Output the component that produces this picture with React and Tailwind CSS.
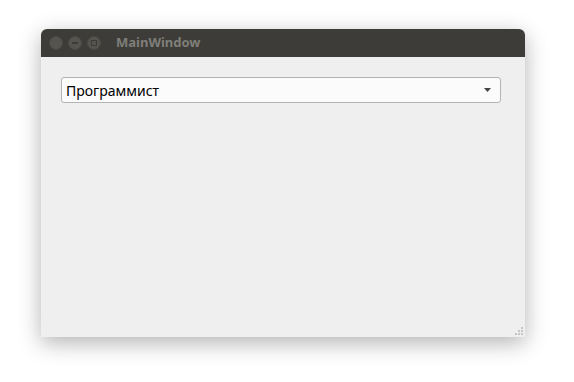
export default function App() {
  return (
    <div className="w-[574px] h-[382px] bg-white relative overflow-hidden" style={{ fontFamily: '"Noto Sans", "DejaVu Sans", sans-serif' }}>
      <div className="absolute left-[41px] top-[29px] w-[484px] h-[308px] flex flex-col rounded-t-[6px] shadow-[0_6px_22px_rgba(0,0,0,0.3)]">
        <div className="h-[28px] bg-[#3d3c38] rounded-t-[6px] flex items-center pl-[8px]">
          <div className="flex items-center gap-[5px]">
            <div className="w-[14px] h-[14px] rounded-full bg-[#55544f] border border-[#4a4945]" />
            <div className="w-[14px] h-[14px] rounded-full bg-[#55544f] border border-[#4a4945] flex items-center justify-center">
              <div className="w-[6px] h-[2px] bg-[#3d3c38]" />
            </div>
            <div className="w-[14px] h-[14px] rounded-full bg-[#55544f] border border-[#4a4945] flex items-center justify-center">
              <div className="w-[6px] h-[6px] border border-[#3d3c38]" />
            </div>
          </div>
          <span className="ml-[15px] text-[13px] font-bold text-[#7f7e79]" style={{ fontFamily: '"Noto Sans", sans-serif' }}>MainWindow</span>
        </div>
        <div className="flex-1 bg-[#efefef] pt-[20px] px-[20px] relative">
          <div className="h-[26px] w-[440px] bg-[#fbfbfb] border border-[#b3b3b3] rounded-[3px] flex items-center pl-[4px] pr-[9px] justify-between">
            <span className="text-[14px] text-black">Программист</span>
            <svg width="7" height="4" viewBox="0 0 7 4"><path d="M0 0 L7 0 L3.5 4 Z" fill="#444" /></svg>
          </div>
          <div className="absolute right-[2px] bottom-[2px] w-[8px] h-[8px] grid grid-cols-3 gap-[1px] opacity-60">
            <div /><div /><div className="bg-[#aaa] w-[2px] h-[2px]" />
            <div /><div className="bg-[#aaa] w-[2px] h-[2px]" /><div className="bg-[#aaa] w-[2px] h-[2px]" />
            <div className="bg-[#aaa] w-[2px] h-[2px]" /><div className="bg-[#aaa] w-[2px] h-[2px]" /><div className="bg-[#aaa] w-[2px] h-[2px]" />
          </div>
        </div>
      </div>
    </div>
  );
}
